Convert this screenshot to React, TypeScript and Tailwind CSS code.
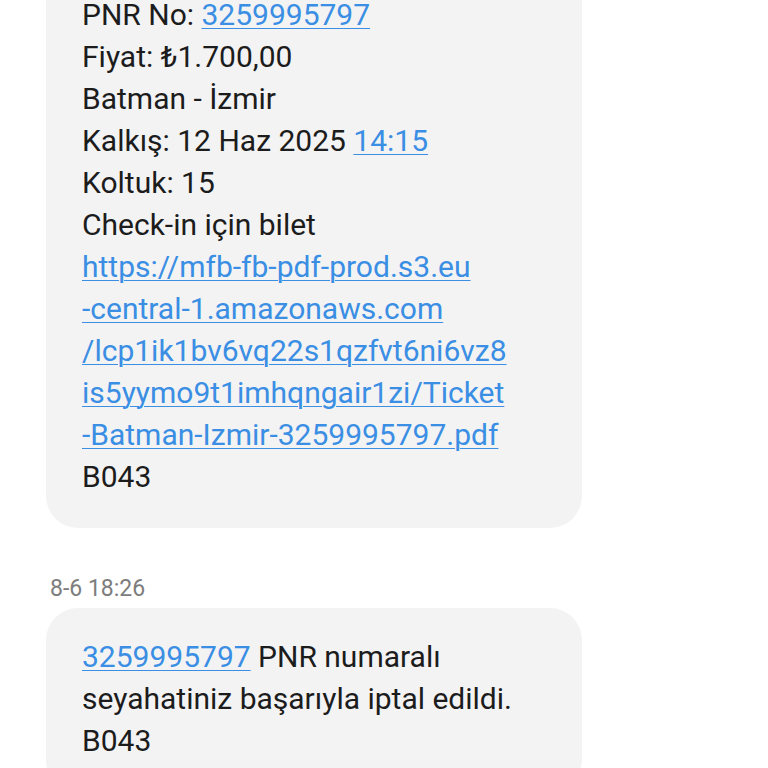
const link = "text-[#3a8ee3] underline decoration-1 underline-offset-[3px]";

function Bubble({ children, className = "" }: { children: React.ReactNode; className?: string }) {
  return (
    <div className={`w-[536px] rounded-[32px] bg-[#f3f3f4] px-[36px] text-[30px] leading-[42px] text-[#1c1c1c] ${className}`}>
      {children}
    </div>
  );
}

export default function App() {
  return (
    <div
      className="h-[768px] w-[768px] overflow-hidden bg-white pl-[46px]"
      style={{ fontFamily: "Roboto, 'Noto Sans', sans-serif" }}
    >
      <Bubble className="mt-[-42px] pt-[36px] pb-[30px]">
        <div>
          PNR No: <span className={link}>3259995797</span>
        </div>
        <div>Fiyat: ₺1.700,00</div>
        <div>Batman - İzmir</div>
        <div>
          Kalkış: 12 Haz 2025 <span className={link}>14:15</span>
        </div>
        <div>Koltuk: 15</div>
        <div>Check-in için bilet</div>
        <div className={link}>https://mfb-fb-pdf-prod.s3.eu</div>
        <div className={link}>-central-1.amazonaws.com</div>
        <div className={link}>/lcp1ik1bv6vq22s1qzfvt6ni6vz8</div>
        <div className={link}>is5yymo9t1imhqngair1zi/Ticket</div>
        <div className={link}>-Batman-Izmir-3259995797.pdf</div>
        <div>B043</div>
      </Bubble>

      <div className="mt-[48px] pl-[4px] text-[23px] leading-[26px] text-[#7d7d7d]">8-6 18:26</div>

      <Bubble className="mt-[6px] pt-[28px] pb-[30px]">
        <div>
          <span className={link}>3259995797</span> PNR numaralı
        </div>
        <div>seyahatiniz başarıyla iptal edildi.</div>
        <div>B043</div>
      </Bubble>
    </div>
  );
}
